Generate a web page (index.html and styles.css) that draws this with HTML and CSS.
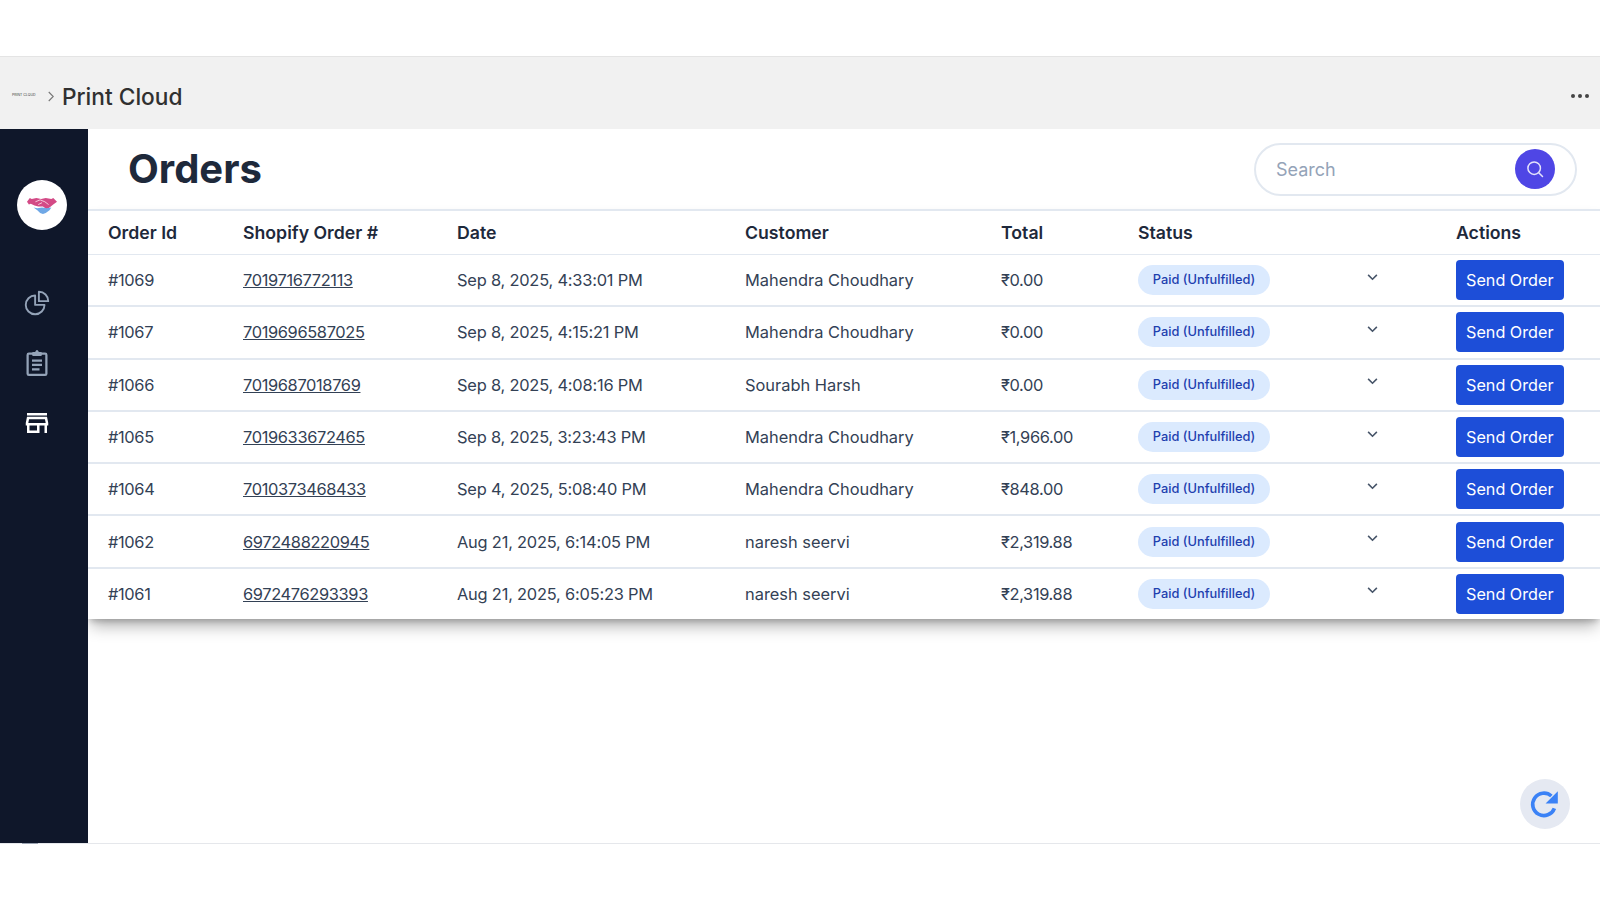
FILE: index.html
```html
<!DOCTYPE html>
<html lang="en">

<head>
    <meta charset="UTF-8">
    <title>Print Cloud - Orders</title>
    <link rel="stylesheet" href="styles.css">
</head>

<body>
<div class="top-strip"></div>

<!-- app title bar -->
<div class="app-bar">
    <span class="app-logo">PRINT CLOUD</span>
    <svg class="crumb" viewBox="0 0 8 14" width="6" height="11"><path d="M1 1l6 6-6 6" fill="none" stroke="#777" stroke-width="1.5"/></svg>
    <span class="app-name">Print Cloud</span>
    <span class="dots"><i></i><i></i><i></i></span>
</div>

<div class="layout">
    <!-- sidebar -->
    <aside class="sidebar">
        <div class="avatar">
            <svg viewBox="0 0 32 20" width="30" height="19">
                <path d="M0 6l3-4 2 1 5-1 5 1 5-1 6 1 2-1 4 4-4 3-4 3-3 2-4-3-5 0-4-1-4-2-2 1z" fill="#d34a86"/>
                <path d="M7 12l4 3 3 3 3 1 3-1 4-3 2-3-5 1-5-1-5 1z" fill="#6fa8e6"/>
                <path d="M9 6l5-2 5 2 4 3M12 9l4-2" fill="none" stroke="#f7cfe0" stroke-width="1"/>
            </svg>
        </div>
        <nav class="side-nav">
            <a class="side-link">
                <svg viewBox="0 0 24 24" width="30" height="30" fill="none" stroke="currentColor" stroke-width="1.5" stroke-linejoin="round"><path d="M10.5 6a7.5 7.5 0 1 0 7.5 7.5h-7.5V6Z"/><path d="M13.5 10.5H21A7.5 7.5 0 0 0 13.5 3v7.5Z"/></svg>
            </a>
            <a class="side-link">
                <svg viewBox="0 0 24 24" width="30" height="30" fill="none" stroke="currentColor" stroke-width="1.8" stroke-linejoin="round"><path d="M9 4.5H5.5a1 1 0 0 0-1 1v15a1 1 0 0 0 1 1h13a1 1 0 0 0 1-1v-15a1 1 0 0 0-1-1H15"/><path d="M9 5.5V4h2l1-1.5L13 4h2v1.500z" fill="currentColor"/><path d="M8 10h8M8 13.500h8M8 17h6"/></svg>
            </a>
            <a class="side-link active">
                <svg viewBox="0 0 24 24" width="30" height="30" fill="currentColor"><path d="M18.36 9l.6 3H5.04l.6-3h12.72M20 4H4v2h16V4zm0 3H4l-1 5v2h1v6h10v-6h4v6h2v-6h1v-2l-1-5zM6 18v-4h6v4H6z"/></svg>
            </a>
        </nav>
        <span class="side-stub"></span>
    </aside>

    <main class="content">
        <header class="page-head">
            <h1>Orders</h1>
            <div class="search-box">
                <span class="search-text">Search</span>
                <span class="search-btn">
                    <svg viewBox="0 0 24 24" width="20" height="20" fill="none" stroke="#e4e2fb" stroke-width="1.8" stroke-linecap="round"><circle cx="11" cy="11" r="7.500"/><path d="M16.500 16.500L21 21"/></svg>
                </span>
            </div>
        </header>

        <table class="orders">
            <colgroup>
                <col class="c-id"><col class="c-shopify"><col class="c-date"><col class="c-customer"><col class="c-total"><col class="c-status"><col class="c-actions">
            </colgroup>
            <thead>
                <tr><th>Order Id</th><th>Shopify Order #</th><th>Date</th><th>Customer</th><th>Total</th><th>Status</th><th>Actions</th></tr>
            </thead>
            <tbody id="rows"></tbody>
        </table>
    </main>
</div>

<div class="footer-strip"></div>

<!-- floating refresh -->
<button class="refresh">
    <svg viewBox="0 0 30 30" width="32" height="32"><path d="M23.800 19A10.500 10.500 0 1 1 21 7.500" fill="none" stroke="#3b82f6" stroke-width="3.400"/><path d="M27 3v11.500H15.500z" fill="#3b82f6"/></svg>
</button>

<script>
    const orders = [
        ["#1069", "7019716772113", "Sep 8, 2025, 4:33:01 PM", "Mahendra Choudhary", "₹0.00"],
        ["#1067", "7019696587025", "Sep 8, 2025, 4:15:21 PM", "Mahendra Choudhary", "₹0.00"],
        ["#1066", "7019687018769", "Sep 8, 2025, 4:08:16 PM", "Sourabh Harsh", "₹0.00"],
        ["#1065", "7019633672465", "Sep 8, 2025, 3:23:43 PM", "Mahendra Choudhary", "₹1,966.00"],
        ["#1064", "7010373468433", "Sep 4, 2025, 5:08:40 PM", "Mahendra Choudhary", "₹848.00"],
        ["#1062", "6972488220945", "Aug 21, 2025, 6:14:05 PM", "naresh seervi", "₹2,319.88"],
        ["#1061", "6972476293393", "Aug 21, 2025, 6:05:23 PM", "naresh seervi", "₹2,319.88"]
    ];
    const chevron = '<svg class="chevron" viewBox="0 0 12 8" width="11" height="7"><path d="M1 1l5 5 5-5" fill="none" stroke="#475569" stroke-width="1.800"/></svg>';

    document.getElementById("rows").innerHTML = orders.map(function (o) {
        return '<tr><td class="num">' + o[0] + '</td><td class="num"><a class="order-link">' + o[1] + '</a></td><td class="date">' + o[2] + "</td><td>" + o[3] + '</td><td class="num">' + o[4] + "</td>" +
            '<td><div class="status-cell"><span class="pill">Paid (Unfulfilled)</span>' + chevron + "</div></td>" +
            '<td><button class="send-btn">Send Order</button></td></tr>';
    }).join("");
</script>
</body>

</html>
```

FILE: styles.css
```css
body {
    margin: 0;
    height: 900px;
    overflow: hidden;
    background-color: #fff;
    color: #1e293b;
    font-family: Inter, "Liberation Sans", sans-serif;
}

.top-strip {
    height: 57px;
    border-bottom: 1px solid #e4e4e4;
    box-sizing: border-box;
}

/* title bar */
.app-bar {
    display: flex;
    align-items: center;
    height: 72px;
    padding: 6px 11px 0 12px;
    box-sizing: border-box;
    background-color: #f1f1f1;
}

.app-logo {
    width: 27px;
    margin-top: -2px;
    font-size: 3.500px;
    white-space: nowrap;
    color: #444;
}

.crumb {
    margin: 1px 8px 0 9px;
}

.app-name {
    font-size: 22.700px;
    font-weight: 500;
    color: #303030;
}

.dots {
    display: flex;
    gap: 3px;
    margin-left: auto;
}

.dots i {
    width: 4px;
    height: 4px;
    border-radius: 50%;
    background-color: #444;
}

.layout {
    display: flex;
    height: 714px;
}

/* sidebar */
.sidebar {
    position: relative;
    flex: 0 0 88px;
    background-color: #0f172a;
    padding-top: 51px;
    box-sizing: border-box;
}

.side-stub {
    position: absolute;
    left: 22px;
    bottom: -1px;
    width: 16px;
    height: 1px;
    background-color: #9aa3b2;
}

.avatar {
    display: flex;
    align-items: center;
    justify-content: center;
    width: 50px;
    height: 50px;
    margin-left: 17px;
    border-radius: 50%;
    background-color: #fff;
}

.side-nav {
    display: flex;
    flex-direction: column;
    gap: 30px;
    margin-top: 58px;
    padding-left: 22px;
}

.side-link {
    display: block;
    height: 30px;
    color: #94a3b8;
}

.side-link.active {
    color: #fff;
}

/* main */
.content {
    flex: 1;
    min-width: 0;
}

.page-head {
    display: flex;
    align-items: center;
    justify-content: space-between;
    height: 80px;
    padding: 0 23px 0 40px;
    box-sizing: border-box;
}

.page-head h1 {
    margin: -1px 0 0;
    font-size: 40px;
    font-weight: 700;
    color: #1e293b;
}

.search-box {
    display: flex;
    align-items: center;
    justify-content: space-between;
    width: 323px;
    height: 53px;
    padding: 0 20px 0 20px;
    border: 2px solid #e2e8f0;
    border-radius: 27px;
    box-sizing: border-box;
}

.search-text {
    font-size: 18px;
    color: #94a3b8;
}

.search-btn {
    display: flex;
    align-items: center;
    justify-content: center;
    width: 40px;
    height: 40px;
    border-radius: 50%;
    background-color: #4f46e5;
}

/* orders table */
.orders {
    width: 100%;
    table-layout: fixed;
    border-collapse: collapse;
    background-color: #fff;
    border-top: 2px solid #e2e8f0;
    box-shadow: 0 10px 15px -3px rgba(0, 0, 0, 0.3), 0 4px 6px -2px rgba(0, 0, 0, 0.2);
}

.c-id { width: 135px; }
.c-shopify { width: 214px; }
.c-date { width: 288px; }
.c-customer { width: 256px; }
.c-total { width: 137px; }
.c-status { width: 318px; }

.orders th {
    height: 43px;
    padding: 0 0 0 20px;
    text-align: left;
    font-size: 17.700px;
    font-weight: 600;
    border-bottom: 1px solid #e2e8f0;
}

.orders td {
    height: 50.300px;
    padding: 0 0 0 20px;
    font-size: 16.400px;
    color: #334155;
    border-bottom: 2px solid #e2e8f0;
}

.orders td.num {
    letter-spacing: -0.350px;
}

.orders td.date {
    letter-spacing: -0.200px;
}

.orders tr:last-child td {
    border-bottom: 0;
}

.order-link {
    text-decoration: underline;
    color: #334155;
}

.status-cell {
    display: flex;
    align-items: center;
}

.pill {
    width: 132px;
    height: 30px;
    line-height: 30px;
    text-align: center;
    border-radius: 15px;
    background-color: #dbeafe;
    color: #1e40af;
    font-size: 12.800px;
    font-weight: 500;
}

.chevron {
    margin: -6px 0 0 97px;
}

.send-btn {
    width: 107.500px;
    height: 40px;
    padding: 0;
    border: 0;
    border-radius: 4px;
    background-color: #1d4ed8;
    color: #fff;
    font-family: inherit;
    font-size: 16.200px;
}

.footer-strip {
    border-top: 1px solid #e5e7eb;
}

.refresh {
    position: fixed;
    left: 1520px;
    top: 779px;
    display: flex;
    align-items: center;
    justify-content: center;
    width: 50px;
    height: 50px;
    padding: 0;
    border: 0;
    border-radius: 50%;
    background-color: #e5e9f2;
}
```
